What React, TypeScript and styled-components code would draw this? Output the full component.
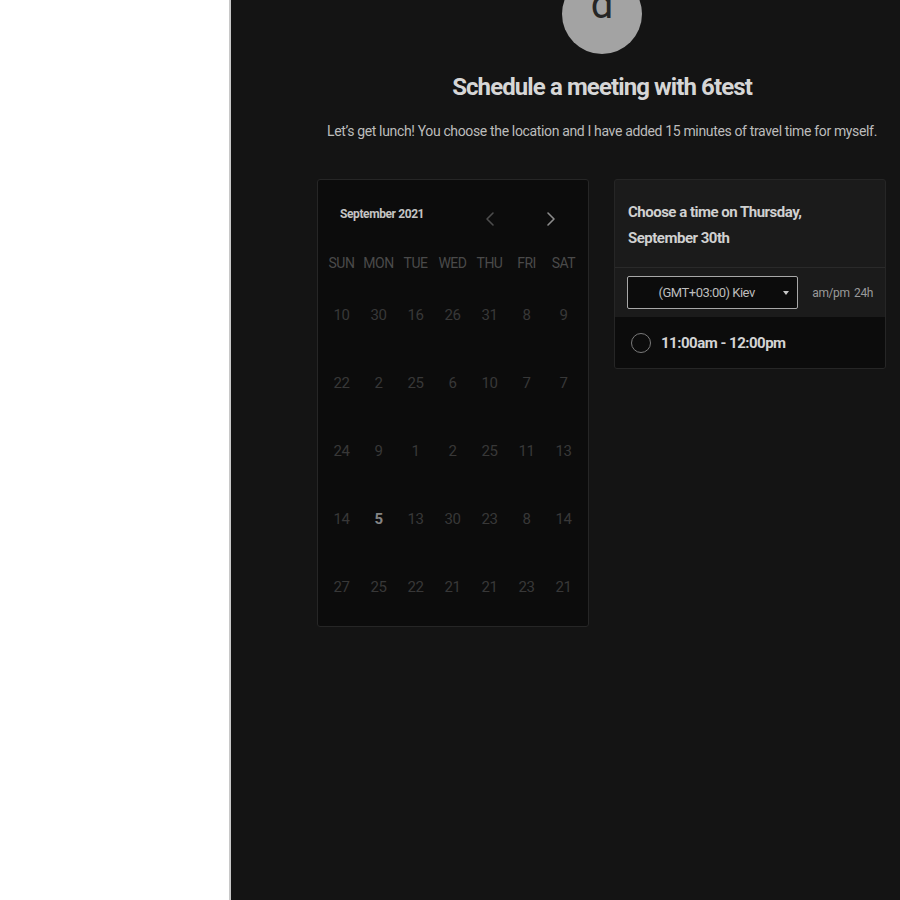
import React from 'react'
import styled, { createGlobalStyle } from 'styled-components'

const GlobalStyle = createGlobalStyle`
  html, body {
    margin: 0;
    padding: 0;
    background: #ffffff;
    font-family: Roboto, "Liberation Sans", sans-serif;
  }
`

const Page = styled.div`
  display: flex;
  width: 900px;
  height: 900px;
  overflow: hidden;
`

const Sidebar = styled.div`
  width: 229px;
  flex-shrink: 0;
  background: #ffffff;
  border-right: 2px solid #c8c8c8;
`

const Main = styled.div`
  flex: 1;
  background: #141414;
  overflow: hidden;
`

const Content = styled.div`
  width: 570px;
  margin-left: 86px;
  display: flex;
  flex-direction: column;
  align-items: center;
`

const Avatar = styled.div`
  width: 80px;
  height: 80px;
  margin-top: -26px;
  border-radius: 50%;
  background: #a3a3a3;
  color: #262626;
  display: flex;
  justify-content: center;
  align-items: flex-start;
  font-size: 40px;
  line-height: 40px;
  overflow: hidden;
  & > span {
    margin-top: 11px;
  }
`

const Title = styled.h1`
  margin: 18px 0 0;
  font-size: 24px;
  line-height: 30px;
  font-weight: 700;
  letter-spacing: -0.9px;
  color: #d6d6d6;
`

const Description = styled.p`
  margin: 19px 0 0;
  font-size: 14px;
  line-height: 20px;
  letter-spacing: -0.35px;
  color: #bcbcbc;
  white-space: nowrap;
`

const Panels = styled.div`
  display: flex;
  gap: 25px;
  margin-top: 38px;
  align-self: stretch;
  align-items: flex-start;
`

const CalendarCard = styled.div`
  width: 272px;
  box-sizing: border-box;
  background: #0c0c0c;
  border: 1px solid #262626;
  border-radius: 3px;
  padding: 0 5px 5px;
`

const CalHeader = styled.div`
  height: 68px;
  display: flex;
  align-items: center;
  padding: 0 17px;
`

const MonthLabel = styled.div`
  flex: 1;
  font-size: 12px;
  font-weight: 700;
  letter-spacing: -0.4px;
  color: #c4c4c4;
`

const NavButton = styled.button<{ $dim?: boolean }>`
  width: 30px;
  height: 24px;
  padding: 0;
  border: 0;
  background: transparent;
  display: flex;
  align-items: center;
  justify-content: center;
  margin-top: 10px;
  color: ${(p) => (p.$dim ? '#4d4d4d' : '#8c8c8c')};
  margin-left: ${(p) => (p.$dim ? '0' : '31px')};
`

const WeekGrid = styled.div`
  display: grid;
  grid-template-columns: repeat(7, 37px);
  height: 30px;
  align-items: center;
  margin-bottom: 3px;
`

const WeekDay = styled.div`
  text-align: center;
  font-size: 14px;
  letter-spacing: -0.5px;
  color: #4a4a4a;
`

const DayGrid = styled.div`
  display: grid;
  grid-template-columns: repeat(7, 37px);
  grid-auto-rows: 68px;
  align-items: center;
`

const Day = styled.div<{ $active?: boolean }>`
  text-align: center;
  font-size: 15px;
  letter-spacing: -0.5px;
  color: ${(p) => (p.$active ? '#858585' : '#383838')};
  font-weight: ${(p) => (p.$active ? 700 : 400)};
`

const TimeCard = styled.div`
  width: 272px;
  box-sizing: border-box;
  background: #1b1b1b;
  border: 1px solid #262626;
  border-radius: 3px;
  overflow: hidden;
`

const TimeHeader = styled.div`
  padding: 19px 60px 16px 13px;
  font-size: 15px;
  line-height: 26px;
  font-weight: 700;
  letter-spacing: -0.5px;
  color: #d0d0d0;
  border-bottom: 1px solid #2a2a2a;
`

const ZoneRow = styled.div`
  display: flex;
  align-items: center;
  height: 49px;
  padding: 0 12px;
  gap: 14px;
`

const ZoneSelect = styled.div`
  position: relative;
  width: 174px;
  height: 33px;
  box-sizing: border-box;
  border: 1px solid #a8a8a8;
  border-radius: 2px;
  background: #0c0c0c;
  display: flex;
  align-items: center;
  justify-content: center;
  font-size: 13px;
  letter-spacing: -0.5px;
  color: #bdbdbd;
  padding-right: 12px;
`

const Caret = styled.span`
  position: absolute;
  right: 8px;
  top: 14px;
  width: 0;
  height: 0;
  border-left: 3px solid transparent;
  border-right: 3px solid transparent;
  border-top: 4px solid #c8c8c8;
`

const FormatToggle = styled.div`
  font-size: 12px;
  letter-spacing: -0.4px;
  color: #9a9a9a;
  word-spacing: 2px;
  white-space: nowrap;
`

const Slot = styled.div`
  display: flex;
  align-items: center;
  gap: 10px;
  height: 51px;
  padding: 0 16px;
  background: #0c0c0c;
`

const Radio = styled.span`
  width: 18px;
  height: 18px;
  border: 1.5px solid #7a7a7a;
  border-radius: 50%;
`

const SlotLabel = styled.span`
  font-size: 15px;
  font-weight: 700;
  letter-spacing: -0.5px;
  color: #d4d4d4;
`

const weekDays = ['SUN', 'MON', 'TUE', 'WED', 'THU', 'FRI', 'SAT']
const days = [
  10, 30, 16, 26, 31, 8, 9,
  22, 2, 25, 6, 10, 7, 7,
  24, 9, 1, 2, 25, 11, 13,
  14, 5, 13, 30, 23, 8, 14,
  27, 25, 22, 21, 21, 23, 21,
]

const Chevron = ({ left }: { left?: boolean }) => (
  <svg width="10" height="16" viewBox="0 0 10 16" fill="none">
    <path
      d={left ? 'M8 2 L2 8 L8 14' : 'M2 2 L8 8 L2 14'}
      stroke="currentColor"
      strokeWidth="1.6"
      strokeLinecap="round"
      strokeLinejoin="round"
    />
  </svg>
)

export default function App() {
  return (
    <>
      <GlobalStyle />
      <Page>
        <Sidebar />
        <Main>
          <Content>
            <Avatar>
              <span>d</span>
            </Avatar>
            <Title>Schedule a meeting with 6test</Title>
            <Description>
              Let’s get lunch! You choose the location and I have added 15 minutes of travel time for myself.
            </Description>
            <Panels>
              <CalendarCard>
                <CalHeader>
                  <MonthLabel>September 2021</MonthLabel>
                  <NavButton $dim>
                    <Chevron left />
                  </NavButton>
                  <NavButton>
                    <Chevron />
                  </NavButton>
                </CalHeader>
                <WeekGrid>
                  {weekDays.map((d) => (
                    <WeekDay key={d}>{d}</WeekDay>
                  ))}
                </WeekGrid>
                <DayGrid>
                  {days.map((d, i) => (
                    <Day key={i} $active={i === 22}>
                      {d}
                    </Day>
                  ))}
                </DayGrid>
              </CalendarCard>
              <TimeCard>
                <TimeHeader>Choose a time on Thursday, September 30th</TimeHeader>
                <ZoneRow>
                  <ZoneSelect>
                    (GMT+03:00) Kiev
                    <Caret />
                  </ZoneSelect>
                  <FormatToggle>am/pm 24h</FormatToggle>
                </ZoneRow>
                <Slot>
                  <Radio />
                  <SlotLabel>11:00am - 12:00pm</SlotLabel>
                </Slot>
              </TimeCard>
            </Panels>
          </Content>
        </Main>
      </Page>
    </>
  )
}
